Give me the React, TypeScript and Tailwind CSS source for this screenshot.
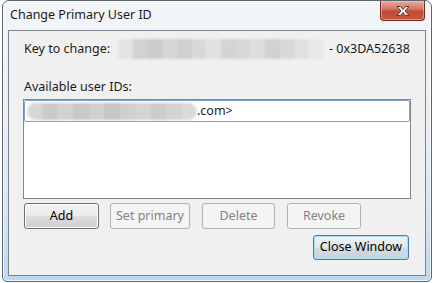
import React from "react";

const font = { fontFamily: '"Noto Sans", "Open Sans", sans-serif' };

function Smudge({ colors, w, h, className }: { colors: string[]; w: number; h: number; className?: string }) {
  const bw = w / colors.length;
  return (
    <div className={"flex overflow-hidden blur-[1.2px] " + (className ?? "")} style={{ width: w, height: h }}>
      {colors.map((c, i) => (
        <div key={i} style={{ width: bw, height: h, background: c }} />
      ))}
    </div>
  );
}

function Btn({ label, w, enabled, ml }: { label: string; w: string; enabled?: boolean; ml: string }) {
  if (enabled) {
    return (
      <div
        className={`${w} ${ml} h-[26px] rounded-[3px] border border-[#707070] bg-[linear-gradient(#f2f2f2_0%,#ebebeb_48%,#dddddd_52%,#cfcfcf_100%)] shadow-[inset_0_0_0_1px_#fcfcfc] flex items-center justify-center text-[12.5px] text-black`}
      >
        {label}
      </div>
    );
  }
  return (
    <div
      className={`${w} ${ml} h-[26px] rounded-[3px] border border-[#adb2b5] bg-[#f4f4f4] flex items-center justify-center text-[12.5px] text-[#838383]`}
    >
      {label}
    </div>
  );
}

export default function App() {
  return (
    <div className="w-[436px] h-[283px] bg-white overflow-hidden" style={font}>
      <div className="ml-[2px] w-[430px] h-[282px] rounded-t-[7px] rounded-b-[5px] border border-[#5b6570] bg-[linear-gradient(#f3f5f8_0%,#eaeff5_45%,#d3e3f4_80%,#bcd6f2_100%)] shadow-[inset_0_0_0_1px_rgba(255,255,255,0.7)] flex flex-col">
        <div className="h-[29px] flex items-start justify-between">
          <div className="ml-[7px] mt-[5px] text-[12.5px] text-[#1b1b1b] leading-[18px]">Change Primary User ID</div>
          <div className="mr-[6px] w-[45px] h-[20px] rounded-b-[4px] border border-t-0 border-[#6f2b22] bg-[linear-gradient(#e9a99c_0%,#d47a68_40%,#c14a33_55%,#c8563c_100%)] shadow-[inset_0_0_0_1px_rgba(255,220,210,0.45)] flex items-center justify-center">
            <svg width="16" height="12" viewBox="0 0 16 12">
              <path
                d="M2 1.5 H5.5 L8 4.5 L10.5 1.5 H14 L10 6 L14 10.5 H10.5 L8 7.5 L5.5 10.5 H2 L6 6 Z"
                fill="#ffffff"
                stroke="#5a3a36"
                strokeWidth="1"
                strokeLinejoin="round"
              />
            </svg>
          </div>
        </div>
        <div className="mx-[5px] h-[246px] border border-[#7b8590] bg-[#f0f0f0] flex flex-col">
          <div className="h-[36px] flex items-center text-[12.5px] text-[#1b1b1b]">
            <div className="ml-[15px] w-[94px]">Key to change:</div>
            <Smudge
              w={206}
              h={20}
              colors={["#e4e4e4", "#d2d2d2", "#cccccc", "#d6d6d6", "#cfcfcf", "#d9d9d9", "#e2e2e2", "#d4d4d4", "#d8d8d8", "#dddddd", "#d1d1d1", "#d9d9d9", "#e1e1e1", "#e8e8e8"]}
            />
            <div className="ml-[5px]">- 0x3DA52638</div>
          </div>
          <div className="mt-[10px] h-[20px] ml-[15px] flex items-center text-[12.5px] text-[#1b1b1b]">Available user IDs:</div>
          <div className="mt-[2px] ml-[14px] w-[388px] h-[100px] border border-[#828790] bg-white">
            <div className="h-[22px] rounded-[2px] border border-[#7da2ce] bg-white flex items-center text-[12.5px] text-[#1b1b1b]">
              <Smudge
                className="ml-[2px] rounded-full"
                w={170}
                h={17}
                colors={["#d6d6d6", "#cacaca", "#d2d2d2", "#c8c8c8", "#d0d0d0", "#c6c6c6", "#cfcfcf", "#d4d4d4", "#cbcbcb", "#d3d3d3", "#dadada"]}
              />
              <span>.com&gt;</span>
            </div>
          </div>
          <div className="mt-[4px] flex">
            <Btn label="Add" w="w-[75px]" ml="ml-[15px]" enabled />
            <Btn label="Set primary" w="w-[80px]" ml="ml-[11px]" />
            <Btn label="Delete" w="w-[73px]" ml="ml-[12px]" />
            <Btn label="Revoke" w="w-[74px]" ml="ml-[12px]" />
          </div>
          <div className="mt-[6px] flex justify-end">
            <div className="mr-[16px] w-[96px] h-[25px] rounded-[3px] border border-[#3c7fb1] bg-[linear-gradient(#eef2f5_0%,#e3e8ec_48%,#d3dbe1_52%,#c8d2d9_100%)] shadow-[inset_0_0_0_1px_#aedcf5] flex items-center justify-center text-[12.5px] text-black">
              Close Window
            </div>
          </div>
        </div>
      </div>
    </div>
  );
}
